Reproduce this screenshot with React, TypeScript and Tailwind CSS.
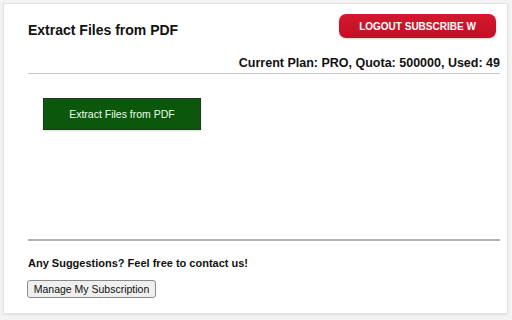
export default function App() {
  return (
    <div
      className="w-[512px] h-[320px] bg-[#f3f3f3] pt-[3px] pl-[3px]"
      style={{ fontFamily: '"Liberation Sans", Arial, sans-serif' }}
    >
      <div className="w-[505px] h-[311px] bg-white border border-[#e2e2e2] shadow-[0_1px_2px_rgba(0,0,0,0.08)] pl-[24px] pr-[7px] flex flex-col">
        {/* header */}
        <div className="flex items-center justify-between pt-[10px] h-[34px]">
          <h1 className="text-[14px] font-bold text-[#111] leading-none mt-[8px]">Extract Files from PDF</h1>
          <button className="mr-[4px] w-[157px] h-[24px] rounded-[7px] bg-gradient-to-b from-[#d4182e] to-[#c10f25] text-white text-[10px] font-bold shadow-[0_1px_2px_rgba(0,0,0,0.2)]">
            LOGOUT SUBSCRIBE W
          </button>
        </div>
        <div className="text-right text-[12.5px] font-bold text-[#111] leading-[16px] mt-[17px]">
          Current Plan: PRO, Quota: 500000, Used: 49
        </div>
        <div className="h-px bg-[#c8c8c8] mt-[2px]" />

        <div className="pt-[24px] pl-[15px] flex">
          <button className="w-[158px] h-[32px] bg-[#0b570b] border border-[#223822] text-[#e8ffe8] text-[10.5px] pt-[1px] shadow-[0_1px_2px_rgba(0,0,0,0.15)]">
            Extract Files from PDF
          </button>
        </div>

        <div className="flex-1" />

        <div className="h-[2px] bg-[#b3b3b3] mb-[15px]" />
        <div className="text-[11px] font-bold text-[#111] leading-[14px]">Any Suggestions? Feel free to contact us!</div>
        <div className="mt-[10px] mb-[15px] flex">
          <button className="-ml-[1px] h-[18px] w-[129px] bg-[#efefef] border border-[#8a8a8a] rounded-[3px] text-[10.5px] text-[#111] leading-none">
            Manage My Subscription
          </button>
        </div>
      </div>
    </div>
  );
}
